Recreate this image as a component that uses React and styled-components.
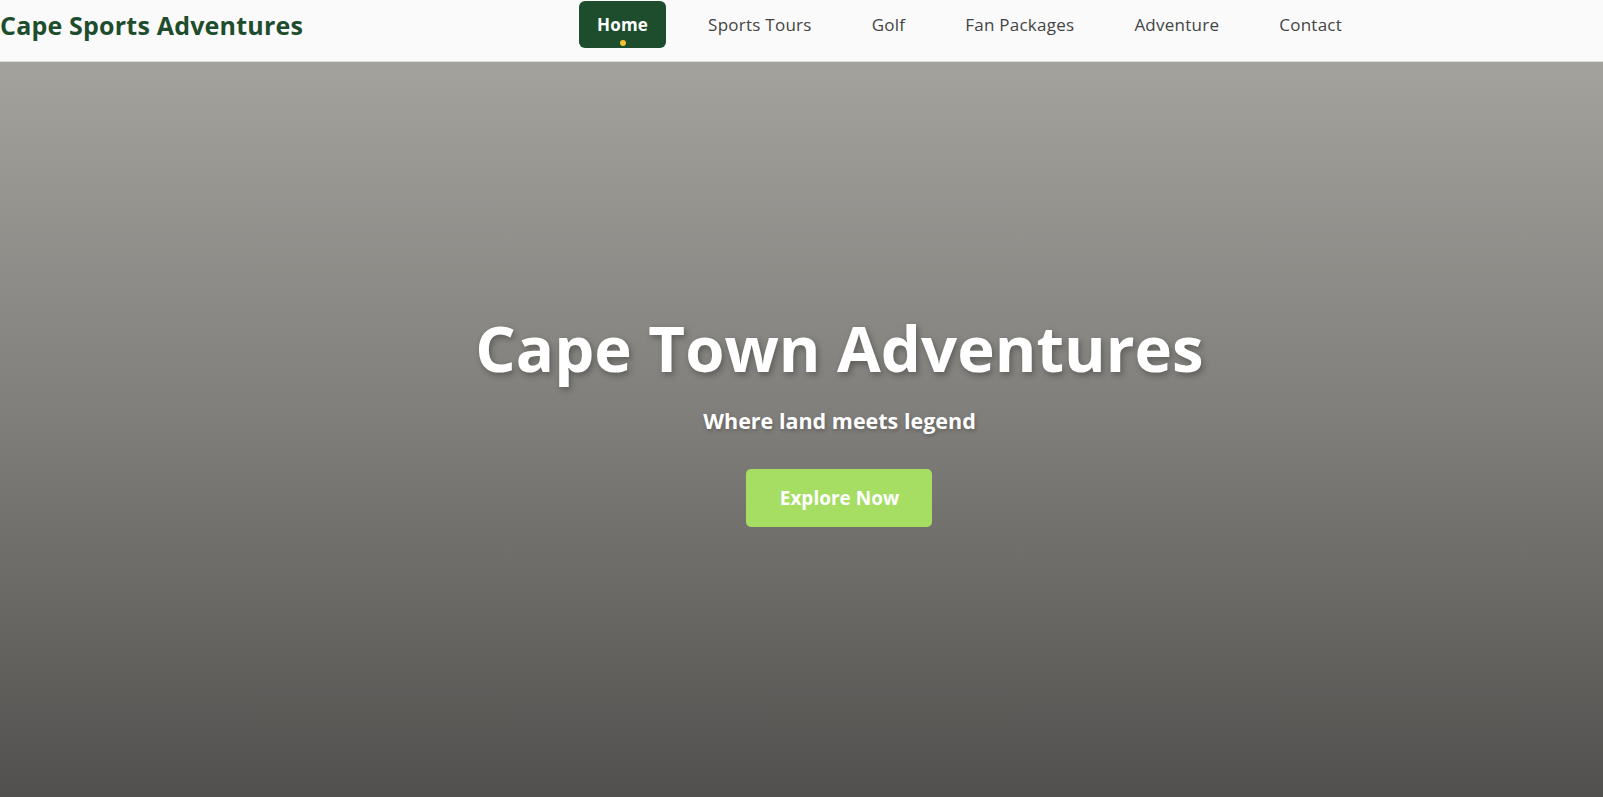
import React from 'react'
import styled, { createGlobalStyle } from 'styled-components'

const GlobalStyle = createGlobalStyle`
  * { box-sizing: border-box; }
  html, body { margin: 0; padding: 0; }
  body {
    font-family: "Open Sans", "Liberation Sans", sans-serif;
    background: #fafafa;
    overflow: hidden;
  }
`

const links = ['Home', 'Sports Tours', 'Golf', 'Fan Packages', 'Adventure', 'Contact']

function App() {
  return (
    <Page>
      <GlobalStyle />
      <Header>
        <Logo>Cape Sports Adventures</Logo>
        <Nav>
          {links.map((l, i) => (
            <NavLink key={l} $active={i === 0}>
              {l}
            </NavLink>
          ))}
        </Nav>
      </Header>
      <Hero>
        <HeroContent>
          <Title>Cape Town Adventures</Title>
          <Tagline>Where land meets legend</Tagline>
          <CTA>Explore Now</CTA>
        </HeroContent>
      </Hero>
    </Page>
  )
}

export default App

const Page = styled.div`
  width: 1603px;
  height: 797px;
  display: flex;
  flex-direction: column;
`

const Header = styled.header`
  height: 62px;
  flex-shrink: 0;
  display: flex;
  align-items: flex-start;
  padding-top: 1px;
  background: #fafafa;
  border-bottom: 1px solid #dcdbd7;
`

const Logo = styled.div`
  width: 579px;
  height: 47px;
  display: flex;
  align-items: center;
  font-size: 25px;
  font-weight: 700;
  color: #1e4d2e;
  letter-spacing: 0.2px;
`

const Nav = styled.nav`
  display: flex;
  gap: 24px;
`

const NavLink = styled.a`
  position: relative;
  height: 47px;
  display: flex;
  align-items: center;
  padding: 0 18px;
  border-radius: 6px;
  font-size: 17px;
  letter-spacing: ${p => (p.$active ? '0.2px' : '0.25px')};
  font-weight: ${p => (p.$active ? 700 : 500)};
  color: ${p => (p.$active ? '#fff' : '#444')};
  background: ${p => (p.$active ? '#1e4d2e' : 'transparent')};
  cursor: pointer;

  &::after {
    content: '';
    display: ${p => (p.$active ? 'block' : 'none')};
    position: absolute;
    left: 50%;
    bottom: 2px;
    width: 6px;
    height: 6px;
    margin-left: -3px;
    border-radius: 50%;
    background: #f2c230;
  }
`

const Hero = styled.section`
  flex: 1;
  display: flex;
  align-items: center;
  justify-content: center;
  padding-left: 76px;
  background: linear-gradient(180deg, #a3a29d 0%, #7f7d79 50%, #52504e 100%);
`

const HeroContent = styled.div`
  display: flex;
  flex-direction: column;
  align-items: center;
  margin-top: -19px;
`

const Title = styled.h1`
  margin: 0;
  font-size: 63.5px;
  font-weight: 700;
  line-height: 70px;
  color: #fff;
  text-shadow: 2px 3px 6px rgba(0, 0, 0, 0.3);
`

const Tagline = styled.p`
  margin: 23px 0 0;
  font-size: 21.5px;
  line-height: 29px;
  font-weight: 700;
  color: #fff;
  text-shadow: 1px 2px 4px rgba(0, 0, 0, 0.25);
`

const CTA = styled.button`
  margin-top: 34px;
  width: 186px;
  height: 58px;
  border: none;
  border-radius: 5px;
  background: #a6dd63;
  color: #fff;
  font-family: inherit;
  font-size: 19px;
  font-weight: 700;
  cursor: pointer;
`
